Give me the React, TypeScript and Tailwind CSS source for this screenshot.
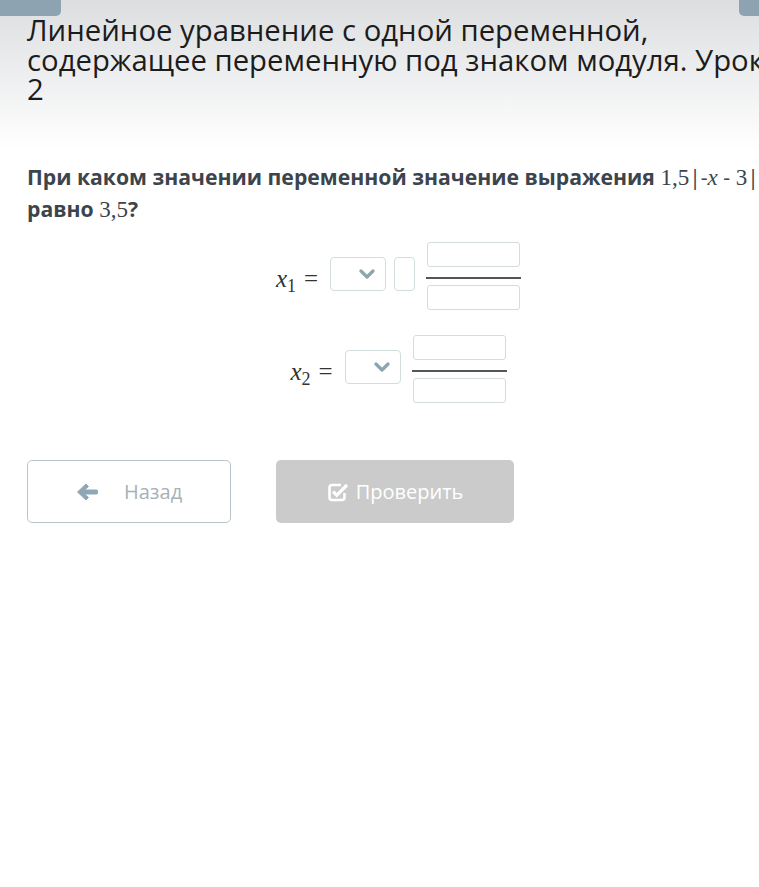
import React from "react";

function Chevron() {
  return (
    <svg width="16" height="12" viewBox="0 0 16 12" className="block">
      <polyline points="2,3 8,9 14,3" fill="none" stroke="#8ba6b1" strokeWidth="3.2" strokeLinecap="round" strokeLinejoin="round" />
    </svg>
  );
}

function ArrowLeft() {
  return (
    <svg width="22" height="20" viewBox="0 0 22 20" className="block">
      <path d="M1.5 10 L10 2 L12.5 4.5 L8.5 8 L20.5 8 Q21.5 8 21.5 9 L21.5 11 Q21.5 12 20.5 12 L8.5 12 L12.5 15.5 L10 18 Z" fill="#8fa7b5" stroke="#8fa7b5" strokeWidth="1" strokeLinejoin="round" />
    </svg>
  );
}

function CheckSquare() {
  return (
    <svg width="22" height="21" viewBox="0 0 22 21" className="block">
      <path d="M14 4 L5 4 Q2.5 4 2.5 6.5 L2.5 16.5 Q2.5 19 5 19 L15 19 Q17.5 19 17.5 16.5 L17.5 12" fill="none" stroke="white" strokeWidth="2.6" />
      <polyline points="6,10.5 9.8,14.3 20,4" fill="none" stroke="white" strokeWidth="3.2" strokeLinejoin="miter" />
    </svg>
  );
}

function Select() {
  return (
    <div className="w-[56px] h-[34px] border border-[#d3dde0] rounded-[4px] bg-white flex items-center justify-end pr-[10px]">
      <Chevron />
    </div>
  );
}

function Fraction() {
  return (
    <div className="flex flex-col items-center">
      <div className="w-[93px] h-[25px] border border-[#d3dde0] rounded-[3px] bg-white" />
      <div className="w-[95px] h-[2px] bg-[#555] mt-[10px]" />
      <div className="w-[93px] h-[25px] border border-[#d3dde0] rounded-[3px] bg-white mt-[6px]" />
    </div>
  );
}

function Lhs({ n }: { n: string }) {
  return (
    <div className="flex items-baseline text-[#333] font-['Liberation_Serif',serif] text-[25px] mt-[6px]">
      <span className="italic">x</span>
      <span className="text-[18px] relative top-[5px]">{n}</span>
      <span className="ml-[8px]">=</span>
    </div>
  );
}

export default function App() {
  return (
    <div className="w-full overflow-hidden bg-white min-h-[887px]">
      <div className="w-[797px] font-['Open_Sans',sans-serif]">
        <div className="bg-gradient-to-b from-[#dcdee0] to-white h-[150px]">
          <div className="flex justify-between h-[16px]">
            <div className="w-[61px] h-[16px] bg-[#8ea3b2] rounded-br-[5px]" />
            <div className="w-[58px] h-[16px] bg-[#8ea3b2] rounded-bl-[5px]" />
          </div>
          <h1 className="px-[27px] text-[29.3px] leading-[29.5px] text-[#1c1c1c] font-normal">
            Линейное уравнение с одной переменной, содержащее переменную под знаком модуля. Урок 2
          </h1>
        </div>
        <div className="px-[27px] mt-[11px]">
          <p className="text-[21.2px] leading-[31px] font-bold text-[#3c444c]">
            При каком значении переменной значение выражения{" "}
            <span className="font-['Liberation_Serif',serif] font-normal text-[23px]">1,5</span>
            <span className="font-normal">|</span>
            <span className="font-normal">-</span>
            <span className="font-['Liberation_Serif',serif] font-normal italic text-[23px]">x</span>
            <span className="font-normal"> - </span>
            <span className="font-['Liberation_Serif',serif] font-normal text-[23px]">3</span>
            <span className="font-normal">|</span> равно{" "}
            <span className="font-['Liberation_Serif',serif] font-normal text-[23px]">3,5</span>?
          </p>

          <div className="flex flex-col items-center mt-[17px] gap-[25px]">
            <div className="flex items-center">
              <Lhs n="1" />
              <div className="ml-[12px] -mt-[4px]"><Select /></div>
              <div className="ml-[8px] w-[21px] h-[34px] border border-[#d3dde0] rounded-[4px] -mt-[4px]" />
              <div className="ml-[11px]"><Fraction /></div>
            </div>
            <div className="flex items-center">
              <Lhs n="2" />
              <div className="ml-[12px] -mt-[4px]"><Select /></div>
              <div className="ml-[11px]"><Fraction /></div>
            </div>
          </div>

          <div className="flex gap-[45px] mt-[57px]">
            <button className="w-[204px] h-[63px] border border-[#b9c4c9] rounded-[5px] bg-white flex items-center pl-[48px] text-[20px] text-[#a7b1b6]">
              <ArrowLeft />
              <span className="ml-[26px]">Назад</span>
            </button>
            <button className="w-[238px] h-[63px] rounded-[5px] bg-[#cbcbcb] flex items-center justify-center text-[20px] text-white">
              <CheckSquare />
              <span className="ml-[7px]">Проверить</span>
            </button>
          </div>
        </div>
      </div>
    </div>
  );
}
